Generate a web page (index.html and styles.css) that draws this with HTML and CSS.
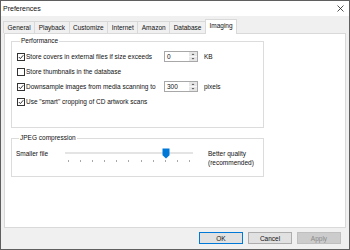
FILE: index.html
```html
<!DOCTYPE html>
<html lang="en">

<head>
    <meta charset="UTF-8">
    <title>Preferences</title>
    <link rel="stylesheet" href="styles.css">
</head>

<body>

    <div class="window">
        <div class="titlebar">
            <span class="title">Preferences</span>
            <svg class="close" width="7" height="7" viewBox="0 0 7 7">
                <path d="M0.5 0.5 L6.5 6.5 M6.5 0.5 L0.5 6.5" stroke="#222" stroke-width="0.8" fill="none"/>
            </svg>
        </div>

        <!-- Pestañas -->
        <div class="tabs">
            <div class="tab">General</div>
            <div class="tab">Playback</div>
            <div class="tab">Customize</div>
            <div class="tab">Internet</div>
            <div class="tab">Amazon</div>
            <div class="tab">Database</div>
            <div class="tab active">Imaging</div>
        </div>

        <div class="panel">
            <div class="group perf">
                <div class="group-title">Performance</div>
                <div class="rows">
                    <div class="row">
                        <span class="cb"><svg width="6" height="6" viewBox="0 0 6 6"><path d="M0.8 3 L2.4 4.6 L5.3 1.2" stroke="#222" stroke-width="0.9" fill="none"/></svg></span>
                        <span class="label fixed">Store covers in external files if size exceeds</span>
                        <span class="spin">
                            <span class="spin-value">0</span>
                            <svg class="spin-btns" width="8" height="9" viewBox="0 0 8 9">
                                <rect x="0" y="0" width="8" height="4.2" fill="#e6e6e6"/>
                                <rect x="0" y="4.8" width="8" height="4.2" fill="#e6e6e6"/>
                                <path d="M2.6 3 L4 1.5 L5.4 3 Z M2.6 6 L4 7.5 L5.4 6 Z" fill="#505050"/>
                            </svg>
                        </span>
                        <span class="unit">KB</span>
                    </div>
                    <div class="row">
                        <span class="cb"></span>
                        <span class="label">Store thumbnails in the database</span>
                    </div>
                    <div class="row">
                        <span class="cb"><svg width="6" height="6" viewBox="0 0 6 6"><path d="M0.8 3 L2.4 4.6 L5.3 1.2" stroke="#222" stroke-width="0.9" fill="none"/></svg></span>
                        <span class="label fixed">Downsample images from media scanning to</span>
                        <span class="spin">
                            <span class="spin-value">300</span>
                            <svg class="spin-btns" width="8" height="9" viewBox="0 0 8 9">
                                <rect x="0" y="0" width="8" height="4.2" fill="#e6e6e6"/>
                                <rect x="0" y="4.8" width="8" height="4.2" fill="#e6e6e6"/>
                                <path d="M2.6 3 L4 1.5 L5.4 3 Z M2.6 6 L4 7.5 L5.4 6 Z" fill="#505050"/>
                            </svg>
                        </span>
                        <span class="unit">pixels</span>
                    </div>
                    <div class="row">
                        <span class="cb"><svg width="6" height="6" viewBox="0 0 6 6"><path d="M0.8 3 L2.4 4.6 L5.3 1.2" stroke="#222" stroke-width="0.9" fill="none"/></svg></span>
                        <span class="label">Use "smart" cropping of CD artwork scans</span>
                    </div>
                </div>
            </div>

            <div class="group jpeg">
                <div class="group-title">JPEG compression</div>
                <div class="quality">
                    <span class="q-left">Smaller file</span>
                    <div class="slider">
                        <div class="track"></div>
                        <div class="ticks">
                            <span></span><span></span><span></span><span></span><span></span><span></span>
                            <span></span><span></span><span></span><span></span><span></span>
                        </div>
                        <svg class="thumb" width="8" height="11" viewBox="0 0 8 11">
                            <path d="M0.5 0.5 H7.5 V7.2 L4 10.5 L0.5 7.2 Z" fill="#0078d7"/>
                        </svg>
                    </div>
                    <span class="q-right">Better quality<br>(recommended)</span>
                </div>
            </div>
        </div>

        <div class="footer">
            <button class="btn default">OK</button>
            <button class="btn">Cancel</button>
            <button class="btn disabled">Apply</button>
        </div>
    </div>

</body>

</html>
```

FILE: styles.css
```css
body {
    margin: 0;
    font-family: "Liberation Sans", Arial, sans-serif;
    font-size: 6.5px;
    color: #111;
}

.window {
    width: 350px;
    height: 250px;
    box-sizing: border-box;
    border: 1px solid #5f5f5f;
    background-color: #f0f0f0;
    display: flex;
    flex-direction: column;
}

.titlebar {
    height: 15px;
    background-color: #ffffff;
    display: flex;
    align-items: center;
    justify-content: space-between;
    padding: 0 5px 0 2px;
}

.title {
    font-size: 7px;
}

/* Pestañas */
.tabs {
    display: flex;
    align-items: flex-end;
    padding: 3px 0 0 2px;
}

.tab {
    height: 12px;
    box-sizing: border-box;
    padding: 0 3.5px;
    border: 1px solid #d9d9d9;
    border-bottom: none;
    margin-left: -1px;
    line-height: 11px;
    background-color: #f0f0f0;
}

.tab:first-child {
    margin-left: 0;
}

.tab.active {
    height: 15px;
    margin-bottom: -1px;
    background-color: #ffffff;
    line-height: 12px;
    position: relative;
    z-index: 1;
}

.panel {
    flex: 1;
    margin: 0 3px;
    border: 1px solid #d9d9d9;
    background-color: #ffffff;
    padding: 7px 0 0 6px;
}

.group {
    width: 253px;
    box-sizing: border-box;
    border: 1px solid #dcdcdc;
}

.group-title {
    width: fit-content;
    margin: -5px 0 0 3px;
    padding: 0 1px;
    line-height: 8px;
    background-color: #ffffff;
}

.perf {
    padding: 0 0 20px 5px;
}

.rows {
    display: flex;
    flex-direction: column;
    gap: 4px;
    margin-top: 6px;
}

.row {
    display: flex;
    align-items: center;
    height: 11px;
}

.cb {
    width: 8px;
    height: 8px;
    box-sizing: border-box;
    border: 1px solid #333;
    background-color: #fff;
    margin-right: 1px;
    display: flex;
    align-items: center;
    justify-content: center;
}

.cb svg {
    display: block;
}

.label.fixed {
    width: 138px;
}

.spin {
    display: flex;
    width: 34px;
    height: 11px;
    box-sizing: border-box;
    border: 1px solid #a8a8a8;
    background-color: #fff;
}

.spin-value {
    flex: 1;
    padding-left: 2px;
    line-height: 9px;
}

.spin-btns {
    display: block;
}

.unit {
    margin-left: 6px;
}

.jpeg {
    margin-top: 10px;
    padding: 0 0 9px 4px;
}

.quality {
    display: flex;
    align-items: flex-start;
    margin-top: 7px;
    line-height: 9px;
}

.q-left {
    width: 49px;
}

.slider {
    position: relative;
    width: 128px;
    height: 18px;
}

.track {
    height: 2px;
    margin-top: 3px;
    background-color: #e4e4e4;
}

.ticks {
    display: flex;
    justify-content: space-between;
    margin: 6px 3px 0;
}

.ticks span {
    width: 1px;
    height: 2px;
    background-color: #a9a9a9;
}

.thumb {
    position: absolute;
    left: 97px;
    top: -1px;
}

.q-right {
    margin-left: 15px;
}

.footer {
    display: flex;
    justify-content: flex-end;
    gap: 5px;
    padding: 4px 8px 5px;
}

.btn {
    width: 44px;
    height: 12px;
    box-sizing: border-box;
    padding: 0;
    border: 1px solid #adadad;
    background-color: #e1e1e1;
    font-family: inherit;
    font-size: 6.5px;
    color: #111;
}

.btn.default {
    border-color: #0078d7;
}

.btn.disabled {
    background-color: #cccccc;
    border-color: #bfbfbf;
    color: #8a8a8a;
}
```
